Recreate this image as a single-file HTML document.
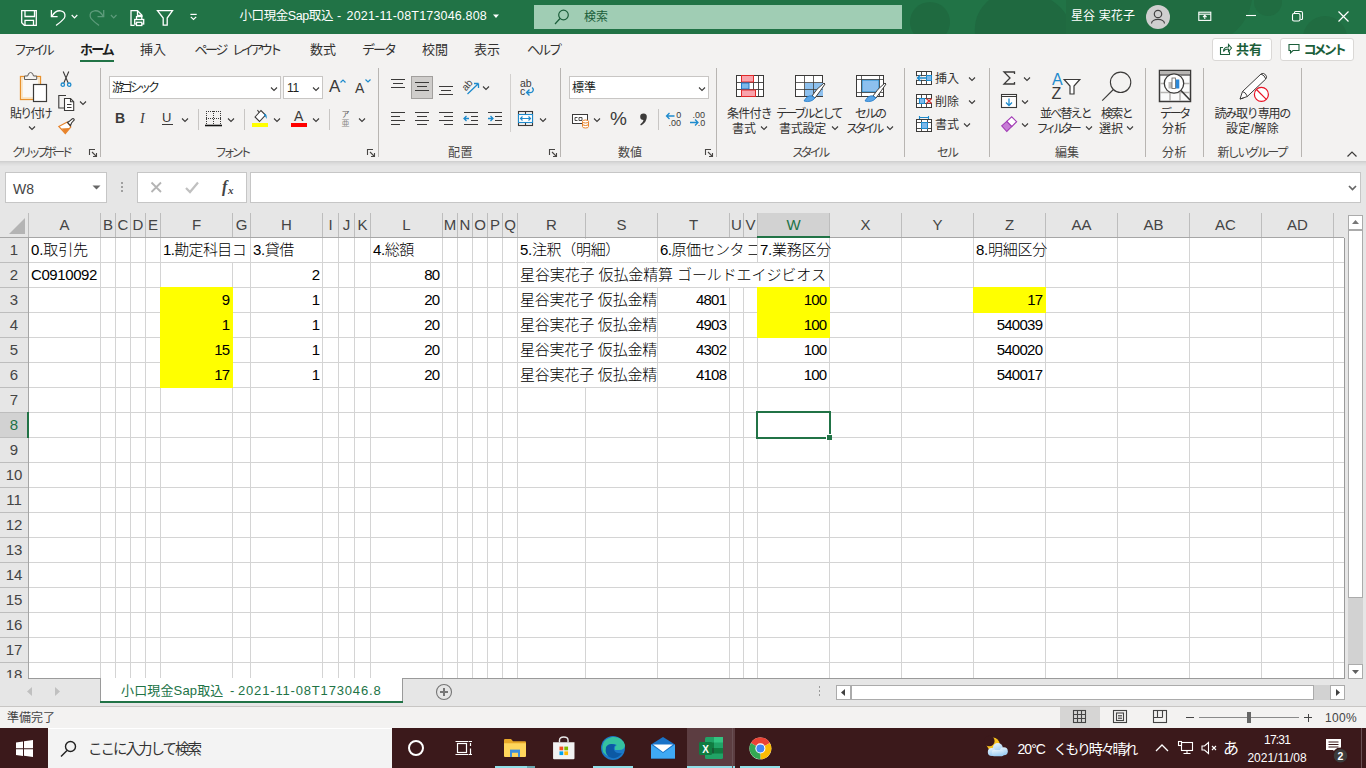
<!DOCTYPE html>
<html lang="ja"><head><meta charset="utf-8"><title>Excel</title>
<style>
html,body{margin:0;padding:0;}
body{width:1366px;height:768px;overflow:hidden;background:#e6e6e6;font-family:"Liberation Sans","Noto Sans CJK JP",sans-serif;}
#root{position:relative;width:1366px;height:768px;overflow:hidden;}
#root>div,#root>svg,#root>span{position:absolute;}
#root svg{overflow:visible;}
.t{white-space:pre;line-height:20px;height:20px;}
</style></head><body><div id="root">
<div style="left:0px;top:0px;width:1366px;height:34px;background:#217346;"></div>
<svg style="left:0;top:0;overflow:hidden" width="1366" height="34" viewBox="0 0 1366 34"><g fill="#1f6940"><path d="M975 34q-2-20 14-34h62q22 14 18 34z"/></g><g fill="#206c41"><rect x="1066" y="0" width="166" height="34"/><circle cx="1268" cy="2" r="14"/><circle cx="1325" cy="38" r="22"/><path d="M1232 0h20q-4 22-20 34z"/></g><g fill="#1f6a40"><circle cx="930" cy="22" r="20"/></g></svg>
<div style="left:0px;top:34px;width:1366px;height:127px;background:#f3f2f1;"></div>
<div style="left:0px;top:161px;width:1366px;height:1px;background:#d0d0d0;"></div>
<div style="left:0px;top:162px;width:1366px;height:1px;background:#d7d7d7;"></div>
<div style="left:0px;top:163px;width:1366px;height:1px;background:#dcdcdc;"></div>
<div style="left:0px;top:164px;width:1366px;height:1px;background:#e0e0e0;"></div>
<div style="left:0px;top:165px;width:1366px;height:1px;background:#e3e3e3;"></div>
<svg style="left:0px;top:0px;" width="220" height="34" viewBox="0 0 220 34"><g fill="none" stroke="#fff" stroke-width="1.300"><path d="M21.700 10.700h14.600v14.600h-12l-2.600-2.600z"/><path d="M25 10.700v5.800h9.500v-5.800"/><path d="M25 25.300v-5h8.500v5"/><path d="M51.400 10v6.600h6.200"/><path d="M52 16.300C54 12.500 57.500 10.500 60.500 10.800C63.500 11.200 65.300 13.500 64.900 16.500C64.500 19.500 60 22.500 56.100 25.400"/><path d="M71.700 15l2.800 2.800 2.800-2.800" stroke-width="1.200"/><path d="M134.500 25.300h-3.500v-14.600h6.500l4.500 4.600v1.400"/><path d="M137.500 10.700v4.600h4.500"/><rect x="134.700" y="19.500" width="9" height="4.500"/><path d="M136.500 19.500v-2.800h5.300v2.800"/><rect x="136.500" y="22.300" width="5.300" height="3.200" fill="#217346"/><path d="M157.500 10.700h15l-5.300 7.300v7.200h-4v-7.200z"/><path d="M190.400 14.400h6.300" stroke-width="1.200"/><path d="M190.800 16.800l2.700 2.700 2.700-2.700" stroke-width="1.200"/></g><g fill="none" stroke="#5d9b7b" stroke-width="1.300"><path d="M103.700 10v6.600h-6.200"/><path d="M103.100 16.300C101.100 12.500 97.600 10.500 94.600 10.800C91.600 11.200 89.800 13.500 90.200 16.500C90.600 19.500 95.100 22.500 99 25.400"/><path d="M110.900 15l2.800 2.800 2.800-2.800" stroke-width="1.200"/></g></svg>
<svg style="left:492px;top:13px;" width="8" height="6" viewBox="0 0 8 6"><path d="M1 1.500l3 3.500 3-3.500z" fill="#fff"/></svg>
<div style="left:534px;top:5px;width:368px;height:24px;background:#a0cdb4;"></div>
<svg style="left:553px;top:7.5px;" width="18" height="18" viewBox="0 0 18 18"><g fill="none" stroke="#1b5e3a" stroke-width="1.200"><circle cx="10.500" cy="7" r="4.800"/><path d="M7 10.500l-5 5.500"/></g></svg>
<svg style="left:1146px;top:5px" width="24" height="24" viewBox="0 0 24 24"><circle cx="12" cy="12" r="12" fill="#cfcfcf"/><g fill="none" stroke="#444" stroke-width="1.200"><circle cx="12" cy="9" r="3.700"/><path d="M5.500 18.500c0-5.500 13-5.500 13 0"/></g></svg>
<svg style="left:1198px;top:11px;" width="14" height="12" viewBox="0 0 14 12"><g fill="none" stroke="#fff" stroke-width="1.100"><rect x="0.800" y="1.200" width="12" height="8.200"/><path d="M0.800 3.200h12"/><path d="M6.800 8v-3.500M5 6.200l1.800-1.800 1.800 1.800"/></g></svg>
<svg style="left:1246px;top:15px;" width="10" height="2" viewBox="0 0 10 2"><path d="M0 0.500h10" stroke="#fff" stroke-width="1.1"/></svg>
<svg style="left:1291.5px;top:11px;" width="11" height="11" viewBox="0 0 11 11"><g fill="none" stroke="#fff" stroke-width="1.1"><rect x="0.500" y="2.500" width="7.500" height="7.500" rx="1.500"/><path d="M2.500 2.500v-1q0-1 1-1h5.500q1.500 0 1.500 1.500v5.500q0 1-1 1h-1"/></g></svg>
<svg style="left:1338px;top:11px;" width="11" height="11" viewBox="0 0 11 11"><path d="M0.500 0.500l10 10M10.500 0.500l-10 10" fill="none" stroke="#fff" stroke-width="1.2"/></svg>
<div style="left:80px;top:60px;width:34px;height:2px;background:#217346;"></div>
<div style="left:1212px;top:38px;width:60px;height:23px;background:#fff;border:1px solid #dad8d6;box-sizing:border-box;border-radius:3px;"></div>
<svg style="left:1219px;top:43px;" width="13" height="12" viewBox="0 0 13 12"><g fill="none" stroke="#1b5e3a" stroke-width="1.1"><path d="M4 4.500h-2.500v7h9v-3"/><path d="M4.500 8.500c0-3 2-4.500 5-4.500v-2.500l3 3.500-3 3.500v-2.500c-2.500 0-4 .5-5 2.500z"/></g></svg>
<div style="left:1280px;top:38px;width:74px;height:23px;background:#fff;border:1px solid #dad8d6;box-sizing:border-box;border-radius:3px;"></div>
<svg style="left:1288px;top:43px;" width="13" height="12" viewBox="0 0 13 12"><path d="M1 1.500h10v6h-6l-2.500 2.500v-2.500h-1.500z" fill="none" stroke="#1b5e3a" stroke-width="1.1"/></svg>
<div style="left:100px;top:68px;width:1px;height:89px;background:#b8b5b2;"></div>
<div style="left:378px;top:68px;width:1px;height:89px;background:#b8b5b2;"></div>
<div style="left:560px;top:68px;width:1px;height:89px;background:#b8b5b2;"></div>
<div style="left:716px;top:68px;width:1px;height:89px;background:#b8b5b2;"></div>
<div style="left:904px;top:68px;width:1px;height:89px;background:#b8b5b2;"></div>
<div style="left:989px;top:68px;width:1px;height:89px;background:#b8b5b2;"></div>
<div style="left:1145px;top:68px;width:1px;height:89px;background:#b8b5b2;"></div>
<div style="left:1203px;top:68px;width:1px;height:89px;background:#b8b5b2;"></div>
<div style="left:1301px;top:68px;width:1px;height:89px;background:#b8b5b2;"></div>
<svg style="left:14px;top:70px;" width="34" height="34" viewBox="0 0 34 34"><rect x="6.500" y="6.500" width="20" height="23" fill="#faf9f8" stroke="#e8912d" stroke-width="1.300"/><rect x="8" y="8" width="17" height="20" fill="none" stroke="#fbdcae" stroke-width="1.200"/><path d="M10.500 9.500v-3.500h3.200q.500-3.500 2.900-3.500t2.900 3.500h3.200v3.500z" fill="#f3f2f1" stroke="#605e5c" stroke-width="1"/><rect x="19.500" y="14.500" width="13" height="17" fill="#fff" stroke="#3b3a39" stroke-width="1.200"/></svg>
<svg style="left:28px;top:125px;" width="8" height="6" viewBox="0 0 8 6"><path d="M1 1.500l3 3 3-3" fill="none" stroke="#3b3a39" stroke-width="1.1"/></svg>
<svg style="left:60px;top:71px;" width="12" height="18" viewBox="0 0 12 18"><g fill="none" stroke-width="1.100"><path d="M3.200 0.500l5 11.500M8.800 0.500l-5 11.500" stroke="#3b3a39"/><circle cx="2.800" cy="13.700" r="1.700" stroke="#1e8bcd" stroke-width="1.300"/><circle cx="9.200" cy="13.700" r="1.700" stroke="#1e8bcd" stroke-width="1.300"/></g></svg>
<svg style="left:58px;top:94px;" width="18" height="18" viewBox="0 0 18 18"><g fill="none" stroke="#3b3a39" stroke-width="1.100"><path d="M8 1.500h-7.200v12.500h5.500"/><path d="M6.500 4.500h6l3.200 3.200v8.800h-9.200z" fill="#fff"/><path d="M12.500 4.500v3.200h3.200" /><path d="M9 10.500h4.500M9 13.500h4.500" /></g></svg>
<svg style="left:79px;top:100px;" width="8" height="6" viewBox="0 0 8 6"><path d="M1 1.500l3 3 3-3" fill="none" stroke="#3b3a39" stroke-width="1.1"/></svg>
<svg style="left:58px;top:118px;" width="18" height="18" viewBox="0 0 18 18"><path d="M0.800 8.500l8.500-4.500 3.500 5-5.500 6.500z" fill="#fff" stroke="#e8832a" stroke-width="1.200"/><path d="M3.500 10.500l8-.500-4.200 5.500z" fill="#e8832a"/><path d="M9.500 4.500l1.800-1.200 3-2.500q1.500-.500 2 1l-2.800 3.200-1 2.700z" fill="#fff" stroke="#3b3a39" stroke-width="1.100"/></svg>
<svg style="left:89px;top:149px;" width="8" height="8" viewBox="0 0 8 8"><g fill="none" stroke="#484644" stroke-width="1.100"><path d="M0.500 6v-5.500h5.500"/><path d="M3 3l4.500 4.500M7.500 4v3.500h-3.500"/></g></svg>
<div style="left:109px;top:76px;width:172px;height:23px;background:#fff;border:1px solid #c8c6c4;box-sizing:border-box;"></div>
<svg style="left:270px;top:85.5px;" width="8" height="6" viewBox="0 0 8 6"><path d="M1 1.500l3 3 3-3" fill="none" stroke="#3b3a39" stroke-width="1.1"/></svg>
<div style="left:283px;top:76px;width:40px;height:23px;background:#fff;border:1px solid #c8c6c4;box-sizing:border-box;"></div>
<svg style="left:312px;top:85.5px;" width="8" height="6" viewBox="0 0 8 6"><path d="M1 1.500l3 3 3-3" fill="none" stroke="#3b3a39" stroke-width="1.1"/></svg>
<svg style="left:340px;top:79px;" width="6" height="4" viewBox="0 0 6 4"><path d="M0.500 3.500l2.500-2.500 2.500 2.500" fill="none" stroke="#1e8bcd" stroke-width="1.200"/></svg>
<svg style="left:365px;top:79px;" width="6" height="4" viewBox="0 0 6 4"><path d="M0.500 0.500l2.500 2.500 2.500-2.500" fill="none" stroke="#1e8bcd" stroke-width="1.200"/></svg>
<div style="left:162px;top:124px;width:11px;height:1px;background:#3b3a39;"></div>
<svg style="left:181px;top:116.5px;" width="8" height="6" viewBox="0 0 8 6"><path d="M1 1.500l3 3 3-3" fill="none" stroke="#3b3a39" stroke-width="1.1"/></svg>
<div style="left:198px;top:109px;width:1px;height:21px;background:#c8c6c4;"></div>
<svg style="left:205px;top:110px;" width="17" height="17" viewBox="0 0 17 17"><g fill="none" stroke="#3b3a39"><path d="M1 1.500h15M1 8.500h15M1.500 1v14M8.500 1v14M15.500 1v14" stroke-dasharray="1 1" stroke-width="1"/><path d="M0 15.500h17" stroke="#111" stroke-width="1.600"/></g></svg>
<svg style="left:227px;top:116.5px;" width="8" height="6" viewBox="0 0 8 6"><path d="M1 1.500l3 3 3-3" fill="none" stroke="#3b3a39" stroke-width="1.1"/></svg>
<div style="left:244px;top:109px;width:1px;height:21px;background:#c8c6c4;"></div>
<svg style="left:252px;top:109px;" width="17" height="14" viewBox="0 0 17 14"><g fill="none" stroke="#3b3a39" stroke-width="1.100"><path d="M3 8l6-6.500 4.500 4.500-6 6.500z" fill="#fff"/><path d="M7 3.500l-1.500-2.500"/></g><path d="M12.500 4.500q3 1 2 5.500q-.8-3-2.500-3.500z" fill="#1e8bcd"/></svg>
<div style="left:252px;top:123px;width:16px;height:4px;background:#ffff00;"></div>
<svg style="left:273px;top:116.5px;" width="8" height="6" viewBox="0 0 8 6"><path d="M1 1.500l3 3 3-3" fill="none" stroke="#3b3a39" stroke-width="1.1"/></svg>
<div style="left:291px;top:123px;width:16px;height:4px;background:#ff0000;"></div>
<svg style="left:312px;top:116.5px;" width="8" height="6" viewBox="0 0 8 6"><path d="M1 1.500l3 3 3-3" fill="none" stroke="#3b3a39" stroke-width="1.1"/></svg>
<div style="left:329px;top:109px;width:1px;height:21px;background:#c8c6c4;"></div>
<svg style="left:358px;top:116.5px;" width="8" height="6" viewBox="0 0 8 6"><path d="M1 1.500l3 3 3-3" fill="none" stroke="#3b3a39" stroke-width="1.1"/></svg>
<svg style="left:367px;top:149px;" width="8" height="8" viewBox="0 0 8 8"><g fill="none" stroke="#484644" stroke-width="1.100"><path d="M0.500 6v-5.500h5.500"/><path d="M3 3l4.500 4.500M7.500 4v3.500h-3.500"/></g></svg>
<svg style="left:390px;top:75px;" width="16" height="17" viewBox="0 0 16 17"><path d="M1 4.5h14" stroke="#3b3a39" stroke-width="1"/><path d="M3 8.5h10" stroke="#3b3a39" stroke-width="1"/><path d="M1 12.5h14" stroke="#3b3a39" stroke-width="1"/></svg>
<div style="left:411px;top:76px;width:22px;height:23px;background:#cfcdcb;border:1px solid #a19f9d;box-sizing:border-box;"></div>
<svg style="left:414px;top:78px;" width="16" height="17" viewBox="0 0 16 17"><path d="M1 4.5h14" stroke="#3b3a39" stroke-width="1"/><path d="M3 8.5h10" stroke="#3b3a39" stroke-width="1"/><path d="M1 12.5h14" stroke="#3b3a39" stroke-width="1"/></svg>
<svg style="left:438px;top:82px;" width="16" height="17" viewBox="0 0 16 17"><path d="M1 4.5h14" stroke="#3b3a39" stroke-width="1"/><path d="M3 8.5h10" stroke="#3b3a39" stroke-width="1"/><path d="M1 12.5h14" stroke="#3b3a39" stroke-width="1"/></svg>
<svg style="left:461px;top:78px;" width="20" height="18" viewBox="0 0 20 18"><g fill="none"><path d="M6.500 16l11-10.500M17.500 5.500h-4.500M17.500 5.500v4.500" stroke="#1e8bcd" stroke-width="1.300"/></g><text x="2.500" y="10" font-size="10" fill="#3b3a39" transform="rotate(-48 7.500 9)" font-family="Liberation Sans,sans-serif">ab</text></svg>
<svg style="left:482px;top:85px;" width="8" height="6" viewBox="0 0 8 6"><path d="M1 1.500l3 3 3-3" fill="none" stroke="#3b3a39" stroke-width="1.1"/></svg>
<svg style="left:390px;top:110px;" width="16" height="17" viewBox="0 0 16 17"><path d="M1 2.5h14" stroke="#3b3a39" stroke-width="1"/><path d="M1 6.5h9" stroke="#3b3a39" stroke-width="1"/><path d="M1 10.5h14" stroke="#3b3a39" stroke-width="1"/><path d="M1 14.5h9" stroke="#3b3a39" stroke-width="1"/></svg>
<svg style="left:414px;top:110px;" width="16" height="17" viewBox="0 0 16 17"><path d="M1 2.5h14" stroke="#3b3a39" stroke-width="1"/><path d="M3 6.5h10" stroke="#3b3a39" stroke-width="1"/><path d="M1 10.5h14" stroke="#3b3a39" stroke-width="1"/><path d="M3 14.5h10" stroke="#3b3a39" stroke-width="1"/></svg>
<svg style="left:438px;top:110px;" width="16" height="17" viewBox="0 0 16 17"><path d="M1 2.5h14" stroke="#3b3a39" stroke-width="1"/><path d="M6 6.5h9" stroke="#3b3a39" stroke-width="1"/><path d="M1 10.5h14" stroke="#3b3a39" stroke-width="1"/><path d="M6 14.5h9" stroke="#3b3a39" stroke-width="1"/></svg>
<svg style="left:463px;top:110px;" width="16" height="17" viewBox="0 0 16 17"><g fill="none" stroke="#3b3a39"><path d="M1 2.500h14M8 6.500h7M8 10.500h7M1 14.500h14"/></g><path d="M6 8.500h-5M3.500 6l-2.500 2.500 2.500 2.500" fill="none" stroke="#1e8bcd" stroke-width="1.300"/></svg>
<svg style="left:487px;top:110px;" width="16" height="17" viewBox="0 0 16 17"><g fill="none" stroke="#3b3a39"><path d="M1 2.500h14M8 6.500h7M8 10.500h7M1 14.500h14"/></g><path d="M1 8.500h5M3.500 6l2.500 2.500-2.500 2.500" fill="none" stroke="#1e8bcd" stroke-width="1.300"/></svg>
<div style="left:510px;top:74px;width:1px;height:58px;background:#d2d0ce;"></div>
<svg style="left:518px;top:79px;" width="18" height="18" viewBox="0 0 18 18"><text x="2" y="8" font-size="10.500" fill="#3b3a39" font-family="Liberation Sans,sans-serif">ab</text><text x="2" y="16" font-size="10.500" fill="#3b3a39" font-family="Liberation Sans,sans-serif">c</text><path d="M14 8.500q2 1.500 1 3.500t-3.500 1.500h-2.500M11.500 10.500l-3 3 3 3" fill="none" stroke="#1e8bcd" stroke-width="1.300"/></svg>
<svg style="left:518px;top:111px;" width="16" height="15" viewBox="0 0 16 15"><g fill="none" stroke="#3b3a39" stroke-width="1.100"><rect x="0.500" y="0.500" width="14" height="14"/><path d="M7.500 0.500v3M7.500 11.500v3"/></g><rect x="0.500" y="3.500" width="14" height="8" fill="#fff" stroke="#1e8bcd" stroke-width="1.100"/><path d="M2.500 7.500h10M4.500 5.500l-2 2 2 2M10.500 5.500l2 2-2 2" fill="none" stroke="#1e8bcd" stroke-width="1.200"/></svg>
<svg style="left:539px;top:116.5px;" width="8" height="6" viewBox="0 0 8 6"><path d="M1 1.500l3 3 3-3" fill="none" stroke="#3b3a39" stroke-width="1.1"/></svg>
<svg style="left:549px;top:149px;" width="8" height="8" viewBox="0 0 8 8"><g fill="none" stroke="#484644" stroke-width="1.100"><path d="M0.500 6v-5.500h5.500"/><path d="M3 3l4.500 4.500M7.500 4v3.500h-3.500"/></g></svg>
<div style="left:569px;top:76px;width:140px;height:23px;background:#fff;border:1px solid #c8c6c4;box-sizing:border-box;"></div>
<svg style="left:698px;top:85.5px;" width="8" height="6" viewBox="0 0 8 6"><path d="M1 1.500l3 3 3-3" fill="none" stroke="#3b3a39" stroke-width="1.1"/></svg>
<svg style="left:571.5px;top:114px;" width="18" height="14" viewBox="0 0 18 14"><rect x="0.500" y="0.500" width="15" height="9" fill="#fff" stroke="#3b3a39"/><path d="M3 3.500h2.500M3 3.500v3h2.500M7 3.500h3v3h-3z" fill="none" stroke="#3b3a39" stroke-width="0.900"/><g fill="#fff" stroke="#e8832a" stroke-width="1"><path d="M10.500 7.500v5q0 1.500 3 1.500t3-1.500v-5"/><ellipse cx="13.500" cy="7.500" rx="3" ry="1.500"/><path d="M10.500 10q0 1.500 3 1.500t3-1.500" fill="none"/></g></svg>
<svg style="left:593px;top:116.5px;" width="8" height="6" viewBox="0 0 8 6"><path d="M1 1.500l3 3 3-3" fill="none" stroke="#3b3a39" stroke-width="1.1"/></svg>
<svg style="left:639px;top:113px;" width="9" height="13" viewBox="0 0 9 13"><path d="M4.500 0.500a3.300 3.300 0 0 1 3.300 3.500q0 5-5.800 8.500l-.800-.900q3.200-2.500 3.300-4.500a3.300 3.300 0 0 1 0-6.600z" fill="#3b3a39"/></svg>
<div style="left:658px;top:109px;width:1px;height:21px;background:#c8c6c4;"></div>
<svg style="left:663px;top:110px;" width="20" height="17" viewBox="0 0 20 17"><path d="M11.500 6h-8M6.500 3l-3 3 3 3" fill="none" stroke="#1e8bcd" stroke-width="1.300"/><text x="13.300" y="7.800" font-size="9" fill="#3b3a39" font-family="Liberation Sans,sans-serif">0</text><text x="5.500" y="16" font-size="9" fill="#3b3a39" font-family="Liberation Sans,sans-serif">.00</text></svg>
<svg style="left:687px;top:110px;" width="20" height="17" viewBox="0 0 20 17"><path d="M3 12.500h8M8 9.500l3 3-3 3" fill="none" stroke="#1e8bcd" stroke-width="1.300"/><text x="5.500" y="7.800" font-size="9" fill="#3b3a39" font-family="Liberation Sans,sans-serif">.00</text><text x="10.800" y="16" font-size="9" fill="#3b3a39" font-family="Liberation Sans,sans-serif">.0</text></svg>
<svg style="left:705px;top:149px;" width="8" height="8" viewBox="0 0 8 8"><g fill="none" stroke="#484644" stroke-width="1.100"><path d="M0.500 6v-5.500h5.500"/><path d="M3 3l4.500 4.500M7.500 4v3.500h-3.500"/></g></svg>
<svg style="left:736px;top:75px;" width="28" height="22" viewBox="0 0 28 22"><rect x="0.500" y="0.500" width="27" height="21" fill="#fff" stroke="#3b3a39"/><path d="M5.500 0.500v21M17.500 0.500v21M22.500 0.500v21M0.500 7.500h27M0.500 14.500h27" fill="none" stroke="#3b3a39" stroke-width="0.900"/><rect x="5.500" y="0.500" width="12" height="6.500" fill="#f9a3ab" stroke="#e02828"/><rect x="5.500" y="8" width="7.500" height="6" fill="#7db8ea" stroke="#1e78c8"/><rect x="5.500" y="15" width="14" height="6.500" fill="#f9a3ab" stroke="#e02828"/></svg>
<svg style="left:759.5px;top:125px;" width="8" height="6" viewBox="0 0 8 6"><path d="M1 1.500l3 3 3-3" fill="none" stroke="#3b3a39" stroke-width="1.1"/></svg>
<svg style="left:795px;top:75px;" width="32" height="28" viewBox="0 0 32 28"><rect x="0.500" y="0.500" width="27" height="21" fill="#fff" stroke="#3b3a39"/><rect x="10" y="8" width="18" height="13" fill="#8dc0ee"/><path d="M9.500 0.500v21M18.500 0.500v21M0.500 7.500h27M0.500 14.500h27" fill="none" stroke="#3b3a39" stroke-width="0.800"/><path d="M29 8q-8 6-12 13l3 2q6-8 10-14z" fill="#fff" stroke="#3b3a39" stroke-width="1"/><path d="M17 21q-5-1-8 5q7 2 11-3z" fill="#5aa5e6" stroke="#1e78c8" stroke-width="0.800"/></svg>
<svg style="left:831px;top:125px;" width="8" height="6" viewBox="0 0 8 6"><path d="M1 1.500l3 3 3-3" fill="none" stroke="#3b3a39" stroke-width="1.1"/></svg>
<svg style="left:856px;top:75px;" width="32" height="28" viewBox="0 0 32 28"><rect x="0.500" y="0.500" width="27" height="21" fill="#fff" stroke="#3b3a39"/><rect x="6" y="5" width="17" height="12" fill="#8dc0ee" stroke="#1e8bcd"/><path d="M5.500 0.500v21M23.500 0.500v21M0.500 4.500h27M0.500 17.500h27" fill="none" stroke="#3b3a39" stroke-width="0.800"/><path d="M29 8q-8 6-12 13l3 2q6-8 10-14z" fill="#fff" stroke="#3b3a39" stroke-width="1"/><path d="M17 21q-5-1-8 5q7 2 11-3z" fill="#5aa5e6" stroke="#1e78c8" stroke-width="0.800"/></svg>
<svg style="left:886px;top:125px;" width="8" height="6" viewBox="0 0 8 6"><path d="M1 1.500l3 3 3-3" fill="none" stroke="#3b3a39" stroke-width="1.1"/></svg>
<svg style="left:916px;top:71px;" width="17" height="15" viewBox="0 0 17 15"><rect x="0.500" y="0.500" width="15" height="13" fill="#fff" stroke="#3b3a39"/><path d="M5.500 0.500v13M10.500 0.500v13M0.500 4.500h15M0.500 9.500h15" stroke="#3b3a39" stroke-width="0.900" fill="none"/><rect x="-1" y="5.200" width="11.200" height="3.600" fill="#f3f2f1"/><rect x="10.500" y="4.500" width="5" height="5" fill="#7db8ea" stroke="#1e8bcd"/><path d="M10 7h-8.500M4.500 4l-3 3 3 3" fill="none" stroke="#1e8bcd" stroke-width="1.300"/></svg>
<svg style="left:968px;top:76px;" width="8" height="6" viewBox="0 0 8 6"><path d="M1 1.500l3 3 3-3" fill="none" stroke="#3b3a39" stroke-width="1.1"/></svg>
<svg style="left:916px;top:94px;" width="17" height="15" viewBox="0 0 17 15"><rect x="0.500" y="0.500" width="15" height="13" fill="#fff" stroke="#3b3a39"/><path d="M5.500 0.500v13M10.500 0.500v13M0.500 4.500h15M0.500 9.500h15" stroke="#3b3a39" stroke-width="0.900" fill="none"/><rect x="2" y="5.200" width="15" height="3.600" fill="#f3f2f1"/><rect x="3.500" y="4.500" width="5" height="5" fill="#7db8ea" stroke="#1e8bcd"/><path d="M10.500 4.500l5 5M15.500 4.500l-5 5" stroke="#e03030" stroke-width="1.300" fill="none"/></svg>
<svg style="left:968px;top:99px;" width="8" height="6" viewBox="0 0 8 6"><path d="M1 1.500l3 3 3-3" fill="none" stroke="#3b3a39" stroke-width="1.1"/></svg>
<svg style="left:916px;top:116px;" width="17" height="17" viewBox="0 0 17 17"><path d="M3.500 1.500h9M3.500 0v3M12.500 0v3" stroke="#1e8bcd" fill="none" stroke-width="1.100"/><rect x="0.500" y="3.500" width="15" height="12" fill="#fff" stroke="#3b3a39"/><path d="M5.500 3.500v12M11.500 3.500v12M0.500 6.500h15M0.500 12.500h15" stroke="#3b3a39" fill="none" stroke-width="0.900"/><rect x="5.500" y="6.500" width="6" height="6" fill="#7db8ea" stroke="#1e8bcd"/></svg>
<svg style="left:963px;top:122px;" width="8" height="6" viewBox="0 0 8 6"><path d="M1 1.500l3 3 3-3" fill="none" stroke="#3b3a39" stroke-width="1.1"/></svg>
<svg style="left:1003px;top:71px;" width="13" height="14" viewBox="0 0 13 14"><path d="M11.500 3v-2h-10.500l6 6-6 6h10.500v-2" fill="none" stroke="#3b3a39" stroke-width="1.300"/></svg>
<svg style="left:1022.5px;top:76px;" width="8" height="6" viewBox="0 0 8 6"><path d="M1 1.500l3 3 3-3" fill="none" stroke="#3b3a39" stroke-width="1.1"/></svg>
<svg style="left:1001px;top:94px;" width="16" height="15" viewBox="0 0 16 15"><rect x="0.500" y="0.500" width="15" height="13" fill="#fff" stroke="#3b3a39" stroke-width="1.100"/><path d="M0.500 2.500h15" stroke="#3b3a39"/><path d="M8 4.500v6.500M5 8.500l3 3 3-3" fill="none" stroke="#1e8bcd" stroke-width="1.300"/></svg>
<svg style="left:1021px;top:99px;" width="8" height="6" viewBox="0 0 8 6"><path d="M1 1.500l3 3 3-3" fill="none" stroke="#3b3a39" stroke-width="1.1"/></svg>
<svg style="left:1001px;top:116px;" width="17" height="17" viewBox="0 0 17 17"><path d="M5.700 5.400L10.700 0.850 15.600 5.700 10.700 10.600z" fill="#fff" stroke="#a23bb5" stroke-width="1.100"/><path d="M0.700 9.900L5.700 5.400 10.700 10.600 5.800 15.500z" fill="#c77dd6" stroke="#a23bb5" stroke-width="1.100"/></svg>
<svg style="left:1021px;top:122px;" width="8" height="6" viewBox="0 0 8 6"><path d="M1 1.500l3 3 3-3" fill="none" stroke="#3b3a39" stroke-width="1.1"/></svg>
<svg style="left:1063px;top:78px;" width="18" height="18" viewBox="0 0 18 18"><path d="M1.200 1.500h15.600l-5.800 6.500v8h-4v-8z" fill="#fff" stroke="#3b3a39" stroke-width="1.200"/></svg>
<svg style="left:1084.5px;top:125px;" width="8" height="6" viewBox="0 0 8 6"><path d="M1 1.500l3 3 3-3" fill="none" stroke="#3b3a39" stroke-width="1.1"/></svg>
<svg style="left:1101px;top:71px;" width="32" height="32" viewBox="0 0 32 32"><g fill="none" stroke="#3b3a39" stroke-width="1.100"><circle cx="19.600" cy="11.300" r="10.200"/><path d="M12.400 18.500l-11.200 11.200"/></g></svg>
<svg style="left:1126px;top:125px;" width="8" height="6" viewBox="0 0 8 6"><path d="M1 1.500l3 3 3-3" fill="none" stroke="#3b3a39" stroke-width="1.1"/></svg>
<svg style="left:1159px;top:70px;" width="32" height="32" viewBox="0 0 32 32"><rect x="0.500" y="0.500" width="31" height="31" fill="#fafafa" stroke="#3b3a39" stroke-width="1.500"/><rect x="1" y="1" width="30" height="3.500" fill="#b8b6b4"/><path d="M1 5h30" stroke="#3b3a39" stroke-width="1.200"/><path d="M1 13.500h30M1 22.500h30M11 5v26M21 5v26" stroke="#b8b6b4" stroke-width="1.600"/><circle cx="15" cy="13.500" r="9.700" fill="#fff" stroke="#3b3a39" stroke-width="1.300"/><rect x="9.500" y="12" width="3.500" height="6.500" fill="#bdbbb9"/><rect x="13" y="8" width="3.500" height="10.500" fill="#fff" stroke="#605e5c" stroke-width="0.800"/><rect x="16.800" y="9.500" width="3.500" height="9" fill="#2b88d8"/><path d="M22 20.500l9 9.500" stroke="#3b3a39" stroke-width="1.600"/></svg>
<svg style="left:1238px;top:70px;" width="32" height="32" viewBox="0 0 32 32"><path d="M2 29l2.500-7.500 18.500-17.500q2.500-1.500 4.500.700t.300 4.300l-18.500 17.500z" fill="#fff" stroke="#3b3a39" stroke-width="1"/><path d="M4.500 21.500q3 .500 5 5M23 4q3.500 1 4.800 5M2 29l3.500-1" fill="none" stroke="#3b3a39" stroke-width="1"/><circle cx="23.400" cy="24.400" r="7" fill="#fff" stroke="#e81123" stroke-width="1.200"/><path d="M18.500 19.500l9.800 9.800" stroke="#e81123" stroke-width="1.200"/></svg>
<svg style="left:1347px;top:151px;" width="10" height="6" viewBox="0 0 10 6"><path d="M0.500 5.500l4.500-4.500 4.500 4.500" fill="none" stroke="#3b3a39" stroke-width="1.200"/></svg>
<div style="left:0px;top:166px;width:1366px;height:47px;background:#e6e6e6;"></div>
<div style="left:5px;top:172px;width:102px;height:31px;background:#fff;border:1px solid #c6c6c6;box-sizing:border-box;"></div>
<svg style="left:92px;top:185px;" width="9" height="5" viewBox="0 0 9 5"><path d="M0.500 0.500h8l-4 4z" fill="#666"/></svg>
<div style="left:121px;top:182px;width:2px;height:2px;background:#a0a0a0;"></div>
<div style="left:121px;top:186px;width:2px;height:2px;background:#a0a0a0;"></div>
<div style="left:121px;top:190px;width:2px;height:2px;background:#a0a0a0;"></div>
<div style="left:137px;top:172px;width:110px;height:31px;background:#fff;border:1px solid #c6c6c6;box-sizing:border-box;"></div>
<svg style="left:151px;top:182px;" width="10" height="10" viewBox="0 0 10 10"><path d="M0.500 0.500l9.500 9.500M10 0.500l-9.500 9.500" stroke="#b4b4b4" stroke-width="1.800" fill="none"/></svg>
<svg style="left:185px;top:182px;" width="14" height="11" viewBox="0 0 14 11"><path d="M1 6l4 4 8-9.500" stroke="#c0c0c0" stroke-width="2.200" fill="none"/></svg>
<div style="left:250px;top:172px;width:1111px;height:31px;background:#fff;border:1px solid #c6c6c6;box-sizing:border-box;"></div>
<svg style="left:1348px;top:185px;" width="9" height="6" viewBox="0 0 9 6"><path d="M1 1l3.500 3.500 3.500-3.500" fill="none" stroke="#666" stroke-width="1.700"/></svg>
<div style="left:28px;top:238px;width:1316px;height:440px;background:#fff;"></div>
<div style="left:0px;top:213px;width:1344px;height:24px;background:#e6e6e6;"></div>
<div style="left:0px;top:238px;width:28px;height:440px;background:#e6e6e6;"></div>
<svg style="left:9px;top:218px;" width="16" height="16" viewBox="0 0 16 16"><path d="M16 0v16h-16z" fill="#b4b4b4"/></svg>
<div style="left:28px;top:262px;width:1316px;height:1px;background:#d4d4d4;"></div>
<div style="left:0px;top:262px;width:28px;height:1px;background:#bdbdbd;"></div>
<div style="left:28px;top:287px;width:1316px;height:1px;background:#d4d4d4;"></div>
<div style="left:0px;top:287px;width:28px;height:1px;background:#bdbdbd;"></div>
<div style="left:28px;top:312px;width:1316px;height:1px;background:#d4d4d4;"></div>
<div style="left:0px;top:312px;width:28px;height:1px;background:#bdbdbd;"></div>
<div style="left:28px;top:337px;width:1316px;height:1px;background:#d4d4d4;"></div>
<div style="left:0px;top:337px;width:28px;height:1px;background:#bdbdbd;"></div>
<div style="left:28px;top:362px;width:1316px;height:1px;background:#d4d4d4;"></div>
<div style="left:0px;top:362px;width:28px;height:1px;background:#bdbdbd;"></div>
<div style="left:28px;top:387px;width:1316px;height:1px;background:#d4d4d4;"></div>
<div style="left:0px;top:387px;width:28px;height:1px;background:#bdbdbd;"></div>
<div style="left:28px;top:412px;width:1316px;height:1px;background:#d4d4d4;"></div>
<div style="left:0px;top:412px;width:28px;height:1px;background:#bdbdbd;"></div>
<div style="left:28px;top:437px;width:1316px;height:1px;background:#d4d4d4;"></div>
<div style="left:0px;top:437px;width:28px;height:1px;background:#bdbdbd;"></div>
<div style="left:28px;top:462px;width:1316px;height:1px;background:#d4d4d4;"></div>
<div style="left:0px;top:462px;width:28px;height:1px;background:#bdbdbd;"></div>
<div style="left:28px;top:487px;width:1316px;height:1px;background:#d4d4d4;"></div>
<div style="left:0px;top:487px;width:28px;height:1px;background:#bdbdbd;"></div>
<div style="left:28px;top:512px;width:1316px;height:1px;background:#d4d4d4;"></div>
<div style="left:0px;top:512px;width:28px;height:1px;background:#bdbdbd;"></div>
<div style="left:28px;top:537px;width:1316px;height:1px;background:#d4d4d4;"></div>
<div style="left:0px;top:537px;width:28px;height:1px;background:#bdbdbd;"></div>
<div style="left:28px;top:562px;width:1316px;height:1px;background:#d4d4d4;"></div>
<div style="left:0px;top:562px;width:28px;height:1px;background:#bdbdbd;"></div>
<div style="left:28px;top:587px;width:1316px;height:1px;background:#d4d4d4;"></div>
<div style="left:0px;top:587px;width:28px;height:1px;background:#bdbdbd;"></div>
<div style="left:28px;top:612px;width:1316px;height:1px;background:#d4d4d4;"></div>
<div style="left:0px;top:612px;width:28px;height:1px;background:#bdbdbd;"></div>
<div style="left:28px;top:637px;width:1316px;height:1px;background:#d4d4d4;"></div>
<div style="left:0px;top:637px;width:28px;height:1px;background:#bdbdbd;"></div>
<div style="left:28px;top:662px;width:1316px;height:1px;background:#d4d4d4;"></div>
<div style="left:0px;top:662px;width:28px;height:1px;background:#bdbdbd;"></div>
<div style="left:100px;top:238px;width:1px;height:440px;background:#d4d4d4;"></div>
<div style="left:100px;top:213px;width:1px;height:24px;background:#bdbdbd;"></div>
<div style="left:115px;top:238px;width:1px;height:440px;background:#d4d4d4;"></div>
<div style="left:115px;top:213px;width:1px;height:24px;background:#bdbdbd;"></div>
<div style="left:130px;top:238px;width:1px;height:440px;background:#d4d4d4;"></div>
<div style="left:130px;top:213px;width:1px;height:24px;background:#bdbdbd;"></div>
<div style="left:145px;top:238px;width:1px;height:440px;background:#d4d4d4;"></div>
<div style="left:145px;top:213px;width:1px;height:24px;background:#bdbdbd;"></div>
<div style="left:160px;top:238px;width:1px;height:440px;background:#d4d4d4;"></div>
<div style="left:160px;top:213px;width:1px;height:24px;background:#bdbdbd;"></div>
<div style="left:232px;top:238px;width:1px;height:440px;background:#d4d4d4;"></div>
<div style="left:232px;top:213px;width:1px;height:24px;background:#bdbdbd;"></div>
<div style="left:250px;top:238px;width:1px;height:440px;background:#d4d4d4;"></div>
<div style="left:250px;top:213px;width:1px;height:24px;background:#bdbdbd;"></div>
<div style="left:322px;top:238px;width:1px;height:440px;background:#d4d4d4;"></div>
<div style="left:322px;top:213px;width:1px;height:24px;background:#bdbdbd;"></div>
<div style="left:338px;top:238px;width:1px;height:440px;background:#d4d4d4;"></div>
<div style="left:338px;top:213px;width:1px;height:24px;background:#bdbdbd;"></div>
<div style="left:354px;top:238px;width:1px;height:440px;background:#d4d4d4;"></div>
<div style="left:354px;top:213px;width:1px;height:24px;background:#bdbdbd;"></div>
<div style="left:370px;top:238px;width:1px;height:440px;background:#d4d4d4;"></div>
<div style="left:370px;top:213px;width:1px;height:24px;background:#bdbdbd;"></div>
<div style="left:442px;top:238px;width:1px;height:440px;background:#d4d4d4;"></div>
<div style="left:442px;top:213px;width:1px;height:24px;background:#bdbdbd;"></div>
<div style="left:457px;top:238px;width:1px;height:440px;background:#d4d4d4;"></div>
<div style="left:457px;top:213px;width:1px;height:24px;background:#bdbdbd;"></div>
<div style="left:472px;top:238px;width:1px;height:440px;background:#d4d4d4;"></div>
<div style="left:472px;top:213px;width:1px;height:24px;background:#bdbdbd;"></div>
<div style="left:487px;top:238px;width:1px;height:440px;background:#d4d4d4;"></div>
<div style="left:487px;top:213px;width:1px;height:24px;background:#bdbdbd;"></div>
<div style="left:502px;top:238px;width:1px;height:440px;background:#d4d4d4;"></div>
<div style="left:502px;top:213px;width:1px;height:24px;background:#bdbdbd;"></div>
<div style="left:517px;top:238px;width:1px;height:440px;background:#d4d4d4;"></div>
<div style="left:517px;top:213px;width:1px;height:24px;background:#bdbdbd;"></div>
<div style="left:585px;top:238px;width:1px;height:440px;background:#d4d4d4;"></div>
<div style="left:585px;top:213px;width:1px;height:24px;background:#bdbdbd;"></div>
<div style="left:657px;top:238px;width:1px;height:440px;background:#d4d4d4;"></div>
<div style="left:657px;top:213px;width:1px;height:24px;background:#bdbdbd;"></div>
<div style="left:729px;top:238px;width:1px;height:440px;background:#d4d4d4;"></div>
<div style="left:729px;top:213px;width:1px;height:24px;background:#bdbdbd;"></div>
<div style="left:743px;top:238px;width:1px;height:440px;background:#d4d4d4;"></div>
<div style="left:743px;top:213px;width:1px;height:24px;background:#bdbdbd;"></div>
<div style="left:757px;top:238px;width:1px;height:440px;background:#d4d4d4;"></div>
<div style="left:757px;top:213px;width:1px;height:24px;background:#bdbdbd;"></div>
<div style="left:829px;top:238px;width:1px;height:440px;background:#d4d4d4;"></div>
<div style="left:829px;top:213px;width:1px;height:24px;background:#bdbdbd;"></div>
<div style="left:901px;top:238px;width:1px;height:440px;background:#d4d4d4;"></div>
<div style="left:901px;top:213px;width:1px;height:24px;background:#bdbdbd;"></div>
<div style="left:973px;top:238px;width:1px;height:440px;background:#d4d4d4;"></div>
<div style="left:973px;top:213px;width:1px;height:24px;background:#bdbdbd;"></div>
<div style="left:1045px;top:238px;width:1px;height:440px;background:#d4d4d4;"></div>
<div style="left:1045px;top:213px;width:1px;height:24px;background:#bdbdbd;"></div>
<div style="left:1117px;top:238px;width:1px;height:440px;background:#d4d4d4;"></div>
<div style="left:1117px;top:213px;width:1px;height:24px;background:#bdbdbd;"></div>
<div style="left:1189px;top:238px;width:1px;height:440px;background:#d4d4d4;"></div>
<div style="left:1189px;top:213px;width:1px;height:24px;background:#bdbdbd;"></div>
<div style="left:1261px;top:238px;width:1px;height:440px;background:#d4d4d4;"></div>
<div style="left:1261px;top:213px;width:1px;height:24px;background:#bdbdbd;"></div>
<div style="left:1333px;top:238px;width:1px;height:440px;background:#d4d4d4;"></div>
<div style="left:1333px;top:213px;width:1px;height:24px;background:#bdbdbd;"></div>
<div style="left:28px;top:213px;width:1px;height:24px;background:#bdbdbd;"></div>
<div style="left:0px;top:237px;width:1344px;height:1px;background:#a6a6a6;"></div>
<div style="left:28px;top:238px;width:1px;height:440px;background:#a6a6a6;"></div>
<div style="left:160px;top:287px;width:73px;height:101px;background:#ffff00;"></div>
<div style="left:757px;top:287px;width:73px;height:51px;background:#ffff00;"></div>
<div style="left:973px;top:287px;width:73px;height:26px;background:#ffff00;"></div>
<div style="left:585px;top:288px;width:1px;height:24px;background:#fff;"></div>
<div style="left:585px;top:313px;width:1px;height:24px;background:#fff;"></div>
<div style="left:585px;top:338px;width:1px;height:24px;background:#fff;"></div>
<div style="left:585px;top:363px;width:1px;height:24px;background:#fff;"></div>
<div style="left:585px;top:239px;width:1px;height:24px;background:#fff;"></div>
<div style="left:585px;top:263px;width:1px;height:24px;background:#fff;"></div>
<div style="left:657px;top:263px;width:1px;height:24px;background:#fff;"></div>
<div style="left:729px;top:263px;width:1px;height:24px;background:#fff;"></div>
<div style="left:743px;top:263px;width:1px;height:24px;background:#fff;"></div>
<div style="left:757px;top:263px;width:1px;height:24px;background:#fff;"></div>
<div style="left:232px;top:238px;width:1px;height:24px;background:#fff;"></div>
<div style="left:729px;top:238px;width:1px;height:24px;background:#fff;"></div>
<div style="left:743px;top:238px;width:1px;height:24px;background:#fff;"></div>
<div style="left:758px;top:213px;width:71px;height:23px;background:#d2d2d2;"></div>
<div style="left:757px;top:236px;width:73px;height:2px;background:#217346;"></div>
<div style="left:0px;top:413px;width:27px;height:24px;background:#d2d2d2;"></div>
<div style="left:27px;top:412px;width:2px;height:26px;background:#217346;"></div>
<div style="left:756px;top:411px;width:71px;height:24px;border:2px solid #217346;"></div>
<div style="left:826px;top:434px;width:5px;height:5px;background:#217346;border:1px solid #fff;border-right:none;border-bottom:none;"></div>
<div style="left:1344px;top:213px;width:22px;height:465px;background:#e6e6e6;"></div>
<div style="left:1344px;top:238px;width:1px;height:441px;background:#9a9a9a;"></div>
<div style="left:28px;top:678px;width:1317px;height:1px;background:#9a9a9a;"></div>
<div style="left:1348px;top:230px;width:15px;height:435px;background:#d2d2d2;"></div>
<div style="left:1348px;top:215px;width:15px;height:15px;background:#fff;border:1px solid #ababab;box-sizing:border-box;"></div>
<svg style="left:1352px;top:220px;" width="7" height="4" viewBox="0 0 7 4"><path d="M0 4h7l-3.500-4z" fill="#777"/></svg>
<div style="left:1348px;top:230px;width:15px;height:368px;background:#fff;border:1px solid #ababab;box-sizing:border-box;"></div>
<div style="left:1348px;top:664px;width:15px;height:15px;background:#fff;border:1px solid #ababab;box-sizing:border-box;"></div>
<svg style="left:1352px;top:670px;" width="7" height="4" viewBox="0 0 7 4"><path d="M0 0h7l-3.500 4z" fill="#606060"/></svg>
<div style="left:0px;top:679px;width:1366px;height:27px;background:#e6e6e6;"></div>
<div style="left:0px;top:678px;width:28px;height:1px;background:#e6e6e6;"></div>
<svg style="left:27px;top:687px;" width="5" height="9" viewBox="0 0 5 9"><path d="M5 0v9l-5-4.500z" fill="#c0c0c0"/></svg>
<svg style="left:55px;top:687px;" width="5" height="9" viewBox="0 0 5 9"><path d="M0 0v9l5-4.500z" fill="#c0c0c0"/></svg>
<div style="left:101px;top:678px;width:301px;height:24px;background:#fff;"></div>
<div style="left:100px;top:701px;width:303px;height:2px;background:#217346;"></div>
<div style="left:100px;top:678px;width:1px;height:23px;background:#9a9a9a;"></div>
<div style="left:402px;top:678px;width:1px;height:23px;background:#9a9a9a;"></div>
<svg style="left:436px;top:684px;" width="16" height="16" viewBox="0 0 16 16"><circle cx="8" cy="8" r="7.500" fill="none" stroke="#767676" stroke-width="1.100"/><path d="M4 8h8M8 4v8" stroke="#767676" stroke-width="2"/></svg>
<div style="left:819px;top:686px;width:1px;height:2px;background:#9a9a9a;"></div>
<div style="left:819px;top:690px;width:1px;height:2px;background:#9a9a9a;"></div>
<div style="left:819px;top:694px;width:1px;height:2px;background:#9a9a9a;"></div>
<div style="left:836px;top:685px;width:509px;height:15px;background:#d2d2d2;"></div>
<div style="left:836px;top:685px;width:15px;height:15px;background:#fff;border:1px solid #ababab;box-sizing:border-box;"></div>
<svg style="left:841px;top:689px;" width="4" height="7" viewBox="0 0 4 7"><path d="M4 0v7l-4-3.500z" fill="#404040"/></svg>
<div style="left:851px;top:685px;width:463px;height:15px;background:#fff;border:1px solid #ababab;box-sizing:border-box;"></div>
<div style="left:1330px;top:685px;width:15px;height:15px;background:#fff;border:1px solid #ababab;box-sizing:border-box;"></div>
<svg style="left:1336px;top:689px;" width="4" height="7" viewBox="0 0 4 7"><path d="M0 0v7l4-3.500z" fill="#404040"/></svg>
<div style="left:0px;top:706px;width:1366px;height:22px;background:#f3f2f1;"></div>
<div style="left:0px;top:706px;width:1366px;height:1px;background:#c8c6c4;"></div>
<div style="left:1060px;top:707px;width:40px;height:21px;background:#d6d5d4;"></div>
<svg style="left:1073px;top:710px;" width="14" height="14" viewBox="0 0 14 14"><g fill="none" stroke="#444" stroke-width="1.100"><rect x="0.500" y="0.500" width="12" height="12"/><path d="M4.500 0.500v12M8.500 0.500v12M0.500 4.500h12M0.500 8.500h12"/></g></svg>
<svg style="left:1113px;top:710px;" width="14" height="14" viewBox="0 0 14 14"><g fill="none" stroke="#444" stroke-width="1.100"><rect x="0.500" y="0.500" width="13" height="12"/><rect x="3.500" y="3" width="7" height="7.500"/><path d="M5 5.500h4M5 7h4M5 8.500h4" stroke-width="0.800"/></g></svg>
<svg style="left:1153px;top:710px;" width="14" height="14" viewBox="0 0 14 14"><g fill="none" stroke="#444" stroke-width="1.100"><rect x="0.500" y="0.500" width="13" height="12"/><path d="M4.500 0.500v7M9.500 0.500v7M0.500 7.500h9"/></g></svg>
<div style="left:1186px;top:717px;width:8px;height:1px;background:#444;"></div>
<div style="left:1199px;top:717px;width:100px;height:1px;background:#8a8a8a;"></div>
<div style="left:1247px;top:712px;width:4px;height:11px;background:#666;"></div>
<div style="left:1304px;top:717px;width:8px;height:1px;background:#444;"></div>
<div style="left:1307.5px;top:713.5px;width:1px;height:8px;background:#444;"></div>
<div style="left:0px;top:728px;width:1366px;height:40px;background:#3b191b;"></div>
<svg style="left:16px;top:740px;" width="17" height="17" viewBox="0 0 17 17"><g fill="#fff"><path d="M0 2.400l7-1v6.800h-7z"/><path d="M8 1.300l9-1.300v8.200h-9z"/><path d="M0 9.200h7v6.800l-7-1z"/><path d="M8 9.200h9v7.800l-9-1.300z"/></g></svg>
<div style="left:48px;top:728px;width:344px;height:40px;background:#f3f3f3;border-top:1px solid #fff;box-sizing:border-box;"></div>
<svg style="left:60px;top:740px;" width="18" height="18" viewBox="0 0 18 18"><g fill="none" stroke="#222" stroke-width="1.400"><circle cx="10.500" cy="6.500" r="5"/><path d="M7 10.500l-6 6"/></g></svg>
<svg style="left:407px;top:739px;" width="18" height="18" viewBox="0 0 18 18"><circle cx="9" cy="9" r="7" fill="none" stroke="#fff" stroke-width="2"/></svg>
<svg style="left:455px;top:740px;" width="18" height="16" viewBox="0 0 18 16"><g fill="none" stroke="#fff" stroke-width="1.200"><rect x="2.500" y="3.500" width="9" height="9"/><path d="M0.500 1.500h13M0.500 14.500h13M15.500 3v3M15.500 8.500v6" /><path d="M14 1.500h3M14 14.500h3"/></g></svg>
<svg style="left:503px;top:737px;" width="24" height="21" viewBox="0 0 24 21"><g transform="scale(1,1.050)"><path d="M1 3q0-1 1-1h6l2 2h12q1 0 1 1v3h-22z" fill="#e8a828"/><path d="M1 6h22v12q0 1-1 1h-20q-1 0-1-1z" fill="#ffd65c"/><path d="M7 12h10v7h-10z" fill="#3d8fdc"/><path d="M9 15h6v4h-6z" fill="#ffd65c"/></g></svg>
<div style="left:495px;top:766px;width:32px;height:2px;background:#8fdfe8;"></div>
<div style="left:527px;top:766px;width:8px;height:2px;background:#6aa8b0;"></div>
<svg style="left:551.5px;top:736px;" width="24" height="25" viewBox="0 0 24 25"><g transform="scale(1.070,1.060)"><path d="M7 6v-2q0-3 4-3t4 3v2" fill="none" stroke="#e8e8e8" stroke-width="1.300"/><path d="M1 6h20v15q0 1-1 1h-18q-1 0-1-1z" fill="#f2f2f2"/><rect x="7" y="10" width="3.500" height="3.500" fill="#f25022"/><rect x="11.500" y="10" width="3.500" height="3.500" fill="#7fba00"/><rect x="7" y="14.500" width="3.500" height="3.500" fill="#00a4ef"/><rect x="11.500" y="14.500" width="3.500" height="3.500" fill="#ffb900"/></g></svg>
<svg style="left:600px;top:735px;" width="26" height="26" viewBox="0 0 26 26"><circle cx="13" cy="13" r="12" fill="#1b78c8"/><path d="M3 17q-3-12 9-15q10-1 13 8q0 5-6 5h-4q-1-4 2-5q-7-3-10 2q-2 5 2 9q-4-1-6-4z" fill="#35c1a0"/><path d="M6 12q3-5 10-2q-3 1-2 5q2 4 8 3q-4 6-10 5q-8-2-6-11z" fill="#0c59a4"/></svg>
<div style="left:593px;top:766px;width:40px;height:2px;background:#8fdfe8;"></div>
<svg style="left:649.5px;top:736px;" width="26" height="24" viewBox="0 0 26 24"><g transform="scale(1,1.070)"><path d="M1 8l12-7 12 7v13h-24z" fill="#1a73c8"/><path d="M1 8l12 8 12-8v13h-24z" fill="#3fa9f5"/><path d="M3 8h20l-10 7z" fill="#fff"/></g></svg>
<div style="left:687px;top:728px;width:48px;height:40px;background:#5c3d41;"></div>
<svg style="left:698px;top:736px;" width="26" height="24" viewBox="0 0 26 24"><rect x="7" y="1" width="18" height="22" rx="1.500" fill="#21a366"/><rect x="16" y="1" width="9" height="5.500" fill="#33c481"/><rect x="7" y="6.500" width="9" height="5.500" fill="#107c41"/><rect x="7" y="12" width="9" height="5.500" fill="#185c37"/><rect x="16" y="12" width="9" height="5.500" fill="#107c41"/><rect x="1" y="6" width="13" height="13" rx="1.200" fill="#107c41"/><text x="7.500" y="16.500" font-size="10" font-weight="700" fill="#fff" text-anchor="middle" font-family="Liberation Sans,sans-serif">X</text></svg>
<div style="left:687px;top:766px;width:48px;height:2px;background:#8fdfe8;"></div>
<div style="left:732px;top:728px;width:1px;height:40px;background:#6a5054;"></div>
<svg style="left:748.5px;top:736.5px;" width="23" height="23" viewBox="0 0 23 23"><g transform="scale(0.950)"><circle cx="12" cy="12" r="11.500" fill="#fff"/><path d="M12 12L2.040 6.250A11.500 11.500 0 0 1 21.960 6.250z" fill="#ea4335"/><path d="M12 12L21.960 6.250A11.500 11.500 0 0 1 12 23.500z" fill="#fbbc05"/><path d="M12 12L12 23.500A11.500 11.500 0 0 1 2.040 6.250z" fill="#34a853"/><circle cx="12" cy="12" r="5.300" fill="#fff"/><circle cx="12" cy="12" r="4.200" fill="#4285f4"/></g></svg>
<div style="left:740px;top:766px;width:40px;height:2px;background:#8fdfe8;"></div>
<svg style="left:984px;top:736px;" width="26" height="22" viewBox="0 0 26 22"><defs><linearGradient id="cl" x1="0" y1="0" x2="0.300" y2="1"><stop offset="0" stop-color="#eaf5fd"/><stop offset="1" stop-color="#9ccdf3"/></linearGradient></defs><circle cx="9" cy="8" r="6.500" fill="#f7c11e"/><circle cx="5.300" cy="5" r="5.300" fill="#3b191b"/><g fill="url(#cl)"><circle cx="13.800" cy="12" r="5"/><circle cx="19.800" cy="15.300" r="4"/><circle cx="7.800" cy="16" r="4"/><rect x="7.800" y="14" width="12" height="6.300" rx="2"/></g></svg>
<svg style="left:1155px;top:743px;" width="14" height="9" viewBox="0 0 14 9"><path d="M1 8l6-6 6 6" fill="none" stroke="#fff" stroke-width="1.300"/></svg>
<svg style="left:1178px;top:741px;" width="16" height="15" viewBox="0 0 16 15"><g fill="none" stroke="#fff" stroke-width="1.100"><rect x="3.500" y="1.500" width="11" height="8"/><path d="M9 9.500v3M5.500 12.500h7"/><rect x="0.500" y="0.500" width="3" height="4" fill="#3b191b"/></g></svg>
<svg style="left:1201px;top:741px;" width="18" height="14" viewBox="0 0 18 14"><g fill="none" stroke="#fff" stroke-width="1.100"><path d="M1 5h2.500l4-3.500v11l-4-3.500h-2.500z"/><path d="M11 5l4 4M15 5l-4 4"/></g></svg>
<svg style="left:1325px;top:738px;" width="20" height="20" viewBox="0 0 20 20"><path d="M1 1h15v11h-4v4l-4-4h-7z" fill="#fff"/><path d="M3.500 4h10M3.500 6.500h10M3.500 9h10" stroke="#3b191b" stroke-width="1"/><circle cx="15.500" cy="17.800" r="7.500" fill="#3c3c3c" stroke="#3b191b" stroke-width="1.500"/><text x="15.500" y="21.500" font-size="10.500" fill="#fff" text-anchor="middle" font-weight="700" font-family="Liberation Sans,sans-serif">2</text></svg>
<div style="left:1361px;top:728px;width:1px;height:40px;background:#6a5054;"></div>
<span class="t" style="top:6.0px;font-size:12.5px;color:#ffffff;letter-spacing:-0.417px;left:239.5px;">小口現金Sap取込</span>
<span class="t" style="top:6.0px;font-size:12.5px;color:#ffffff;left:337px;">-</span>
<span class="t" style="top:6.0px;font-size:12.5px;color:#ffffff;letter-spacing:0.181px;left:346.5px;">2021-11-08T173046.808</span>
<span class="t" style="top:6.5px;font-size:12px;color:#1b5e3a;letter-spacing:-0.008px;left:584px;">検索</span>
<span class="t" style="top:6.0px;font-size:12px;color:#ffffff;letter-spacing:0.109px;left:1071px;">星谷 実花子</span>
<span class="t" style="top:40.0px;font-size:13px;color:#323130;letter-spacing:-3.754px;left:14px;">ファイル</span>
<span class="t" style="top:40.0px;font-size:13px;color:#201f1e;font-weight:700;letter-spacing:-1.875px;left:80px;">ホーム</span>
<span class="t" style="top:40.0px;font-size:13px;color:#323130;letter-spacing:-0.008px;left:140px;">挿入</span>
<span class="t" style="top:40.0px;font-size:13px;color:#323130;letter-spacing:-2.417px;left:194.5px;">ページ</span>
<span class="t" style="top:40.0px;font-size:13px;color:#323130;letter-spacing:-3.703px;left:232px;">レイアウト</span>
<span class="t" style="top:40.0px;font-size:13px;color:#323130;letter-spacing:-0.008px;left:310px;">数式</span>
<span class="t" style="top:40.0px;font-size:13px;color:#323130;letter-spacing:-2.005px;left:362px;">データ</span>
<span class="t" style="top:40.0px;font-size:13px;color:#323130;letter-spacing:-0.008px;left:422px;">校閲</span>
<span class="t" style="top:40.0px;font-size:13px;color:#323130;letter-spacing:-0.008px;left:474px;">表示</span>
<span class="t" style="top:40.0px;font-size:13px;color:#323130;letter-spacing:-2.005px;left:527px;">ヘルプ</span>
<span class="t" style="top:40.0px;font-size:13px;color:#1b5e3a;font-weight:700;letter-spacing:-0.008px;left:1236px;">共有</span>
<span class="t" style="top:40.0px;font-size:13px;color:#1b5e3a;font-weight:700;letter-spacing:-2.879px;left:1303.5px;">コメント</span>
<span class="t" style="top:104.0px;font-size:12px;color:#323130;letter-spacing:-1.754px;left:10px;">貼り付け</span>
<span class="t" style="top:143.0px;font-size:12px;color:#484644;letter-spacing:-3.788px;left:12px;">クリップボード</span>
<span class="t" style="top:78.0px;font-size:12px;color:#201f1e;letter-spacing:-3.003px;left:112px;">游ゴシック</span>
<span class="t" style="top:78.0px;font-size:12px;color:#201f1e;letter-spacing:-0.234px;left:287px;">11</span>
<span class="t" style="top:77.0px;font-size:17px;color:#3b3a39;left:329px;">A</span>
<span class="t" style="top:78.0px;font-size:14px;color:#3b3a39;left:355px;">A</span>
<span class="t" style="top:108.0px;font-size:14px;color:#3b3a39;font-weight:700;left:115px;">B</span>
<span class="t" style="top:109.0px;font-size:14px;color:#3b3a39;font-style:italic;font-family:'Liberation Serif',serif;left:140px;">I</span>
<span class="t" style="top:108.0px;font-size:13px;color:#3b3a39;left:162px;">U</span>
<span class="t" style="top:105.5px;font-size:14px;color:#3b3a39;left:294px;">A</span>
<span class="t" style="top:105.0px;font-size:8px;color:#605e5c;left:341.5px;">ア</span>
<span class="t" style="top:113.5px;font-size:8px;color:#8a8886;left:341.5px;">亜</span>
<span class="t" style="top:143.0px;font-size:12px;color:#484644;letter-spacing:-3.754px;left:215px;">フォント</span>
<span class="t" style="top:143.0px;font-size:12px;color:#484644;letter-spacing:0.492px;left:448px;">配置</span>
<span class="t" style="top:78.0px;font-size:12px;color:#201f1e;letter-spacing:-0.008px;left:572px;">標準</span>
<span class="t" style="top:109.0px;font-size:19px;color:#3b3a39;left:610px;">%</span>
<span class="t" style="top:143.0px;font-size:12px;color:#484644;letter-spacing:-0.008px;left:618px;">数値</span>
<span class="t" style="top:104.0px;font-size:12px;color:#323130;letter-spacing:-0.754px;left:727px;">条件付き</span>
<span class="t" style="top:119.0px;font-size:12px;color:#323130;letter-spacing:-0.008px;left:732px;">書式</span>
<span class="t" style="top:104.0px;font-size:12px;color:#323130;letter-spacing:-2.560px;left:776px;">テーブルとして</span>
<span class="t" style="top:119.0px;font-size:12px;color:#323130;letter-spacing:-0.254px;left:779px;">書式設定</span>
<span class="t" style="top:104.0px;font-size:12px;color:#323130;letter-spacing:-2.005px;left:855px;">セルの</span>
<span class="t" style="top:119.0px;font-size:12px;color:#323130;letter-spacing:-3.254px;left:846px;">スタイル</span>
<span class="t" style="top:143.0px;font-size:12px;color:#484644;letter-spacing:-3.254px;left:792px;">スタイル</span>
<span class="t" style="top:69.0px;font-size:12px;color:#323130;letter-spacing:-0.008px;left:935px;">挿入</span>
<span class="t" style="top:92.0px;font-size:12px;color:#323130;letter-spacing:-0.008px;left:935px;">削除</span>
<span class="t" style="top:115.0px;font-size:12px;color:#323130;letter-spacing:-0.008px;left:935px;">書式</span>
<span class="t" style="top:143.0px;font-size:12px;color:#484644;letter-spacing:-2.008px;left:937px;">セル</span>
<span class="t" style="top:69.5px;font-size:16px;color:#1e8bcd;left:1052px;">A</span>
<span class="t" style="top:84.0px;font-size:16px;color:#3b3a39;left:1051.5px;">Z</span>
<span class="t" style="top:104.0px;font-size:12px;color:#323130;letter-spacing:-1.803px;left:1040px;">並べ替えと</span>
<span class="t" style="top:119.0px;font-size:12px;color:#323130;letter-spacing:-3.653px;left:1036.5px;">フィルター</span>
<span class="t" style="top:104.0px;font-size:12px;color:#323130;letter-spacing:-1.672px;left:1101px;">検索と</span>
<span class="t" style="top:119.0px;font-size:12px;color:#323130;letter-spacing:-0.008px;left:1099px;">選択</span>
<span class="t" style="top:143.0px;font-size:12px;color:#484644;letter-spacing:-0.008px;left:1055px;">編集</span>
<span class="t" style="top:104.0px;font-size:12px;color:#323130;letter-spacing:-2.339px;left:1160px;">データ</span>
<span class="t" style="top:119.0px;font-size:12px;color:#323130;letter-spacing:0.492px;left:1162px;">分析</span>
<span class="t" style="top:143.0px;font-size:12px;color:#484644;letter-spacing:0.492px;left:1162px;">分析</span>
<span class="t" style="top:104.0px;font-size:12px;color:#323130;letter-spacing:-1.217px;left:1214.5px;">読み取り専用の</span>
<span class="t" style="top:119.0px;font-size:12px;color:#323130;letter-spacing:0.331px;left:1226px;">設定/解除</span>
<span class="t" style="top:143.0px;font-size:12px;color:#484644;letter-spacing:-2.040px;left:1217.5px;">新しいグループ</span>
<span class="t" style="top:179.0px;font-size:14px;color:#444;left:13px;">W8</span>
<span class="t" style="top:177.0px;font-size:16px;color:#444;font-weight:700;font-style:italic;font-family:'Liberation Serif',serif;left:222px;">f</span>
<span class="t" style="top:180.0px;font-size:11px;color:#444;font-weight:700;font-style:italic;font-family:'Liberation Serif',serif;left:228px;">x</span>
<span class="t" style="top:215.0px;font-size:15px;color:#444;left:-135.500px;width:400px;text-align:center;">A</span>
<span class="t" style="top:215.0px;font-size:15px;color:#444;left:-92.000px;width:400px;text-align:center;">B</span>
<span class="t" style="top:215.0px;font-size:15px;color:#444;left:-77.000px;width:400px;text-align:center;">C</span>
<span class="t" style="top:215.0px;font-size:15px;color:#444;left:-62.000px;width:400px;text-align:center;">D</span>
<span class="t" style="top:215.0px;font-size:15px;color:#444;left:-47.000px;width:400px;text-align:center;">E</span>
<span class="t" style="top:215.0px;font-size:15px;color:#444;left:-3.500px;width:400px;text-align:center;">F</span>
<span class="t" style="top:215.0px;font-size:15px;color:#444;left:41.500px;width:400px;text-align:center;">G</span>
<span class="t" style="top:215.0px;font-size:15px;color:#444;left:86.500px;width:400px;text-align:center;">H</span>
<span class="t" style="top:215.0px;font-size:15px;color:#444;left:130.500px;width:400px;text-align:center;">I</span>
<span class="t" style="top:215.0px;font-size:15px;color:#444;left:146.500px;width:400px;text-align:center;">J</span>
<span class="t" style="top:215.0px;font-size:15px;color:#444;left:162.500px;width:400px;text-align:center;">K</span>
<span class="t" style="top:215.0px;font-size:15px;color:#444;left:206.500px;width:400px;text-align:center;">L</span>
<span class="t" style="top:215.0px;font-size:15px;color:#444;left:250.000px;width:400px;text-align:center;">M</span>
<span class="t" style="top:215.0px;font-size:15px;color:#444;left:265.000px;width:400px;text-align:center;">N</span>
<span class="t" style="top:215.0px;font-size:15px;color:#444;left:280.000px;width:400px;text-align:center;">O</span>
<span class="t" style="top:215.0px;font-size:15px;color:#444;left:295.000px;width:400px;text-align:center;">P</span>
<span class="t" style="top:215.0px;font-size:15px;color:#444;left:310.000px;width:400px;text-align:center;">Q</span>
<span class="t" style="top:215.0px;font-size:15px;color:#444;left:351.500px;width:400px;text-align:center;">R</span>
<span class="t" style="top:215.0px;font-size:15px;color:#444;left:421.500px;width:400px;text-align:center;">S</span>
<span class="t" style="top:215.0px;font-size:15px;color:#444;left:493.500px;width:400px;text-align:center;">T</span>
<span class="t" style="top:215.0px;font-size:15px;color:#444;left:536.500px;width:400px;text-align:center;">U</span>
<span class="t" style="top:215.0px;font-size:15px;color:#444;left:550.500px;width:400px;text-align:center;">V</span>
<span class="t" style="top:215.0px;font-size:15px;color:#217346;left:593.500px;width:400px;text-align:center;">W</span>
<span class="t" style="top:215.0px;font-size:15px;color:#444;left:665.500px;width:400px;text-align:center;">X</span>
<span class="t" style="top:215.0px;font-size:15px;color:#444;left:737.500px;width:400px;text-align:center;">Y</span>
<span class="t" style="top:215.0px;font-size:15px;color:#444;left:809.500px;width:400px;text-align:center;">Z</span>
<span class="t" style="top:215.0px;font-size:15px;color:#444;left:881.500px;width:400px;text-align:center;">AA</span>
<span class="t" style="top:215.0px;font-size:15px;color:#444;left:953.500px;width:400px;text-align:center;">AB</span>
<span class="t" style="top:215.0px;font-size:15px;color:#444;left:1025.500px;width:400px;text-align:center;">AC</span>
<span class="t" style="top:215.0px;font-size:15px;color:#444;left:1097.500px;width:400px;text-align:center;">AD</span>
<span class="t" style="top:239.5px;font-size:15px;color:#444;left:-186.000px;width:400px;text-align:center;">1</span>
<span class="t" style="top:264.5px;font-size:15px;color:#444;left:-186.000px;width:400px;text-align:center;">2</span>
<span class="t" style="top:289.5px;font-size:15px;color:#444;left:-186.000px;width:400px;text-align:center;">3</span>
<span class="t" style="top:314.5px;font-size:15px;color:#444;left:-186.000px;width:400px;text-align:center;">4</span>
<span class="t" style="top:339.5px;font-size:15px;color:#444;left:-186.000px;width:400px;text-align:center;">5</span>
<span class="t" style="top:364.5px;font-size:15px;color:#444;left:-186.000px;width:400px;text-align:center;">6</span>
<span class="t" style="top:389.5px;font-size:15px;color:#444;left:-186.000px;width:400px;text-align:center;">7</span>
<span class="t" style="top:414.5px;font-size:15px;color:#217346;left:-186.000px;width:400px;text-align:center;">8</span>
<span class="t" style="top:439.5px;font-size:15px;color:#444;left:-186.000px;width:400px;text-align:center;">9</span>
<span class="t" style="top:464.5px;font-size:15px;color:#444;left:-186.000px;width:400px;text-align:center;">10</span>
<span class="t" style="top:489.5px;font-size:15px;color:#444;left:-186.000px;width:400px;text-align:center;">11</span>
<span class="t" style="top:514.5px;font-size:15px;color:#444;left:-186.000px;width:400px;text-align:center;">12</span>
<span class="t" style="top:539.5px;font-size:15px;color:#444;left:-186.000px;width:400px;text-align:center;">13</span>
<span class="t" style="top:564.5px;font-size:15px;color:#444;left:-186.000px;width:400px;text-align:center;">14</span>
<span class="t" style="top:589.5px;font-size:15px;color:#444;left:-186.000px;width:400px;text-align:center;">15</span>
<span class="t" style="top:614.5px;font-size:15px;color:#444;left:-186.000px;width:400px;text-align:center;">16</span>
<span class="t" style="top:639.5px;font-size:15px;color:#444;left:-186.000px;width:400px;text-align:center;">17</span>
<span class="t" style="top:664.5px;font-size:15px;color:#444;left:-186.000px;width:400px;text-align:center;overflow:hidden;height:13px;">18</span>
<span class="t" style="top:239.5px;font-size:15px;color:#000;font-weight:300;letter-spacing:-0.103px;left:31px;">0.取引先</span>
<span class="t" style="top:239.5px;font-size:15px;color:#000;font-weight:300;letter-spacing:-0.645px;left:163px;">1.勘定科目コ</span>
<span class="t" style="top:239.5px;font-size:15px;color:#000;font-weight:300;letter-spacing:-0.379px;left:253px;">3.貸借</span>
<span class="t" style="top:239.5px;font-size:15px;color:#000;font-weight:300;letter-spacing:-0.379px;left:373px;">4.総額</span>
<span class="t" style="top:239.5px;font-size:15px;color:#000;font-weight:300;letter-spacing:-0.314px;left:520px;">5.注釈（明細）</span>
<span class="t" style="top:239.5px;font-size:15px;color:#000;font-weight:300;letter-spacing:-0.502px;left:660px;">6.原価センタ</span>
<span class="t" style="top:239.5px;font-size:15px;color:#000;font-weight:300;left:746px;overflow:hidden;width:11px;">コ</span>
<span class="t" style="top:239.5px;font-size:15px;color:#000;font-weight:300;letter-spacing:-0.253px;left:760px;">7.業務区分</span>
<span class="t" style="top:239.5px;font-size:15px;color:#000;font-weight:300;letter-spacing:-0.253px;left:976px;">8.明細区分</span>
<span class="t" style="top:264.5px;font-size:15px;color:#000;font-weight:300;letter-spacing:-0.404px;left:31px;">C0910092</span>
<span class="t" style="top:264.5px;font-size:15px;color:#000;font-weight:300;letter-spacing:-0.107px;left:520px;">星谷実花子 仮払金精算 ゴールドエイジビオス</span>
<span class="t" style="top:289.5px;font-size:15px;color:#000;font-weight:300;letter-spacing:-0.217px;left:520px;">星谷実花子 仮払金精</span>
<span class="t" style="top:314.5px;font-size:15px;color:#000;font-weight:300;letter-spacing:-0.217px;left:520px;">星谷実花子 仮払金精</span>
<span class="t" style="top:339.5px;font-size:15px;color:#000;font-weight:300;letter-spacing:-0.217px;left:520px;">星谷実花子 仮払金精</span>
<span class="t" style="top:364.5px;font-size:15px;color:#000;font-weight:300;letter-spacing:-0.217px;left:520px;">星谷実花子 仮払金精</span>
<span class="t" style="top:264.5px;font-size:15px;color:#000;right:1046.000px;">2</span>
<span class="t" style="top:264.5px;font-size:15px;color:#000;letter-spacing:-0.944px;right:926.944px;">80</span>
<span class="t" style="top:289.5px;font-size:15px;color:#000;right:1136.000px;">9</span>
<span class="t" style="top:314.5px;font-size:15px;color:#000;right:1136.000px;">1</span>
<span class="t" style="top:339.5px;font-size:15px;color:#000;letter-spacing:-0.944px;right:1136.944px;">15</span>
<span class="t" style="top:364.5px;font-size:15px;color:#000;letter-spacing:-0.944px;right:1136.944px;">17</span>
<span class="t" style="top:289.5px;font-size:15px;color:#000;right:1046.000px;">1</span>
<span class="t" style="top:289.5px;font-size:15px;color:#000;letter-spacing:-0.944px;right:926.944px;">20</span>
<span class="t" style="top:289.5px;font-size:15px;color:#000;letter-spacing:-0.844px;right:539.844px;">100</span>
<span class="t" style="top:314.5px;font-size:15px;color:#000;right:1046.000px;">1</span>
<span class="t" style="top:314.5px;font-size:15px;color:#000;letter-spacing:-0.944px;right:926.944px;">20</span>
<span class="t" style="top:314.5px;font-size:15px;color:#000;letter-spacing:-0.844px;right:539.844px;">100</span>
<span class="t" style="top:339.5px;font-size:15px;color:#000;right:1046.000px;">1</span>
<span class="t" style="top:339.5px;font-size:15px;color:#000;letter-spacing:-0.944px;right:926.944px;">20</span>
<span class="t" style="top:339.5px;font-size:15px;color:#000;letter-spacing:-0.844px;right:539.844px;">100</span>
<span class="t" style="top:364.5px;font-size:15px;color:#000;right:1046.000px;">1</span>
<span class="t" style="top:364.5px;font-size:15px;color:#000;letter-spacing:-0.944px;right:926.944px;">20</span>
<span class="t" style="top:364.5px;font-size:15px;color:#000;letter-spacing:-0.844px;right:539.844px;">100</span>
<span class="t" style="top:289.5px;font-size:15px;color:#000;letter-spacing:-0.794px;right:639.794px;">4801</span>
<span class="t" style="top:314.5px;font-size:15px;color:#000;letter-spacing:-0.794px;right:639.794px;">4903</span>
<span class="t" style="top:339.5px;font-size:15px;color:#000;letter-spacing:-0.794px;right:639.794px;">4302</span>
<span class="t" style="top:364.5px;font-size:15px;color:#000;letter-spacing:-0.794px;right:639.794px;">4108</span>
<span class="t" style="top:289.5px;font-size:15px;color:#000;letter-spacing:-0.944px;right:323.944px;">17</span>
<span class="t" style="top:314.5px;font-size:15px;color:#000;letter-spacing:-0.744px;right:323.744px;">540039</span>
<span class="t" style="top:339.5px;font-size:15px;color:#000;letter-spacing:-0.744px;right:323.744px;">540020</span>
<span class="t" style="top:364.5px;font-size:15px;color:#000;letter-spacing:-0.744px;right:323.744px;">540017</span>
<span class="t" style="top:681.0px;font-size:13px;color:#217346;letter-spacing:0.151px;left:121px;">小口現金Sap取込</span>
<span class="t" style="top:681.0px;font-size:13px;color:#217346;left:230px;">-</span>
<span class="t" style="top:681.0px;font-size:13px;color:#217346;letter-spacing:0.831px;left:238px;">2021-11-08T173046.8</span>
<span class="t" style="top:708.0px;font-size:12px;color:#444;letter-spacing:-0.004px;left:7px;">準備完了</span>
<span class="t" style="top:708.0px;font-size:12px;color:#444;letter-spacing:0.324px;left:1325px;">100%</span>
<span class="t" style="top:739.0px;font-size:14.5px;color:#333;letter-spacing:-2.009px;left:88px;">ここに入力して検索</span>
<span class="t" style="top:739.0px;font-size:14px;color:#fff;letter-spacing:-0.945px;left:1017.5px;">20°C</span>
<span class="t" style="top:739.0px;font-size:14px;color:#fff;letter-spacing:-2.214px;left:1053.5px;">くもり時々晴れ</span>
<span class="t" style="top:739.0px;font-size:16px;color:#fff;left:1223px;">あ</span>
<span class="t" style="top:729.5px;font-size:12px;color:#fff;letter-spacing:-0.806px;left:1077.097px;width:400px;text-align:center;">17:31</span>
<span class="t" style="top:748.0px;font-size:12px;color:#fff;left:1077.000px;width:400px;text-align:center;">2021/11/08</span>
</div></body></html>
